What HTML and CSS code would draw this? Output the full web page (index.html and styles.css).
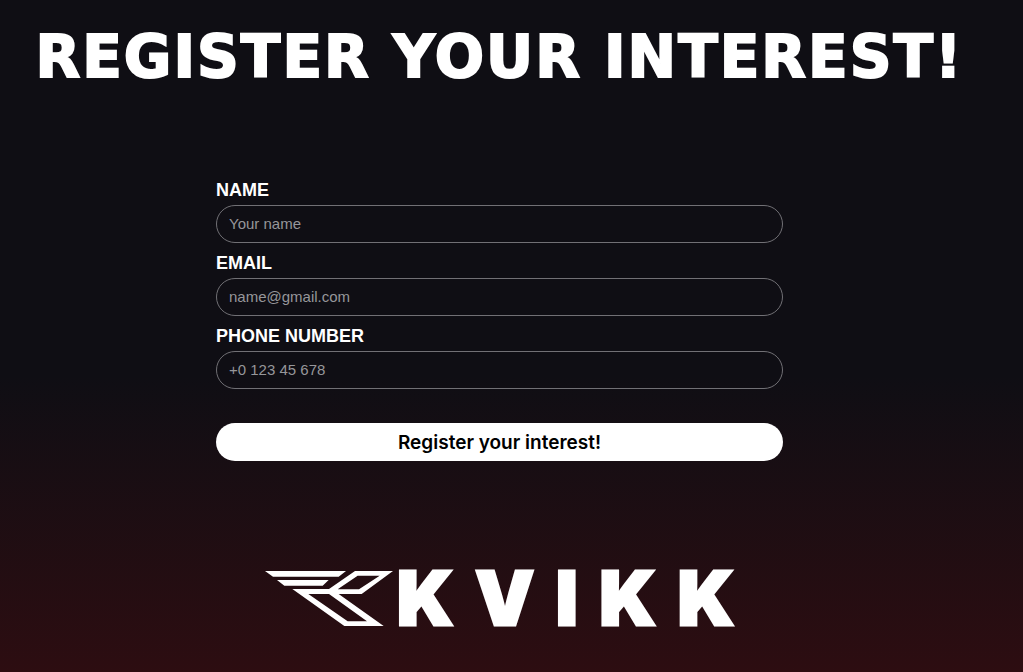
FILE: index.html
```html
<!DOCTYPE html>
<html lang="en">
<head>
<meta charset="utf-8">
<meta name="viewport" content="width=device-width, initial-scale=1">
<title>Register your interest</title>
<link rel="stylesheet" href="styles.css">
</head>
<body class="page">
<main class="content">
  <h1 class="title">REGISTER YOUR INTEREST!</h1>
  <form class="form">
    <label class="label" for="name">NAME</label>
    <input class="field" id="name" type="text" placeholder="Your name">
    <label class="label" for="email">EMAIL</label>
    <input class="field" id="email" type="email" placeholder="name@gmail.com">
    <label class="label" for="phone">PHONE NUMBER</label>
    <input class="field" id="phone" type="tel" placeholder="+0 123 45 678">
    <button class="submit" type="submit">Register your interest!</button>
  </form>
  <div class="brand">
    <svg class="mark" viewBox="24 33 384 165" aria-hidden="true">
      <path fill="currentColor" fill-rule="evenodd" d="M24 33H267L245 50H48ZM60 60H215L197 77H82ZM106 87H216L294 33H408L314 102H245L380 198H262ZM154 102L272 184H330L216 102ZM302 47L242 88H306L368 47Z"/>
    </svg>
    <span class="wordmark">KVIKK</span>
  </div>
</main>
</body>
</html>
```
FILE: styles.css
```css
* {
  box-sizing: border-box;
}

.page {
  min-height: 100vh;
  margin: 0;
  padding: 0 24px 0 0;
  background: linear-gradient(#0f0e14 0%, #0f0e14 56%, #2d0d11 100%);
  color: #fff;
  font-family: "Liberation Sans", Arial, sans-serif;
}

.content {
  display: flex;
  flex-direction: column;
  align-items: center;
  padding-top: 20px;
}

.title {
  margin: 0;
  font-family: "DejaVu Sans", sans-serif;
  font-size: 58px;
  font-weight: 700;
  line-height: 74px;
  letter-spacing: 2px;
  text-align: center;
  white-space: nowrap;
  -webkit-text-stroke: 2px #fff;
}

.form {
  display: flex;
  flex-direction: column;
  width: 100%;
  max-width: 567px;
  margin-top: 84px;
}

.label {
  font-size: 18px;
  font-weight: 700;
  line-height: 24px;
  margin-bottom: 3px;
}

.field {
  height: 38px;
  margin-bottom: 8px;
  padding: 0 12px 2px;
  border: 1px solid #717075;
  border-radius: 19px;
  background: transparent;
  color: #fff;
  font: 15px "Liberation Sans", Arial, sans-serif;
}

.field::placeholder {
  color: #96969a;
  opacity: 1;
}

.submit {
  height: 38px;
  margin-top: 26px;
  padding: 0;
  border: 0;
  border-radius: 19px;
  background: #fff;
  color: #000;
  font: 600 19px Inter, sans-serif;
}

.brand {
  display: flex;
  align-items: center;
  gap: 4px;
  margin-top: 99px;
}

.mark {
  width: 128px;
  height: 55px;
}

.wordmark {
  margin-right: -22px;
  font-family: Inter, sans-serif;
  font-size: 74px;
  font-weight: 900;
  line-height: 76px;
  letter-spacing: 22px;
  -webkit-text-stroke: 3px #fff;
}
```
